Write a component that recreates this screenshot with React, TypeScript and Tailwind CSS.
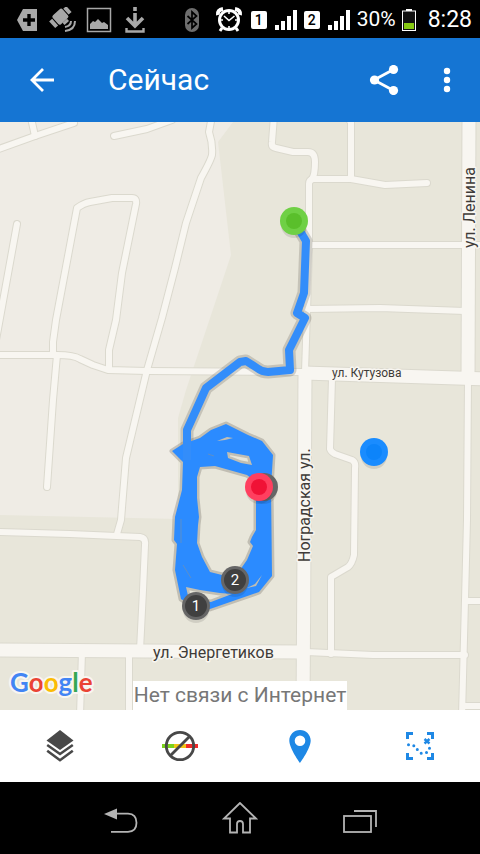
import type { ReactNode } from "react";

const SMALL_ROADS = [
  "M-4 150 35 136 74 123",
  "M31 118 35 136",
  "M114 136 147 129 172 120",
  "M212 116 209 132Q213 144 212 155Q211 160 201 178L186 223 175 268 162 318 147 370 126 458 121 520 117 534",
  "M17 224-4 340",
  "M53 355 53 342 56 320 77 208Q84 203 90 202L112 198H132Q137 198 136 204L122 273 116 320 109 350V369",
  "M-4 355H57Q74 355 80 359L93 365 108 370 147 371 304 372",
  "M57 355 53 400 47 487",
  "M274 116 272 142Q271 147 276 148L293 152H308Q315 152 315 162Q315 175 312 179",
  "M427 183 385 185 351 179H313Q309 180 309 184V250L305 372",
  "M346 116 351 122V179",
  "M308 245H484",
  "M306 309 380 308 465 311",
  "M332 378 330 449Q331 452 335 454L352 460Q356 462 355 468L354 555Q352 564 348 567L331 577V654",
  "M306 652 373 655H465",
  "M468 380 467 520 465 600 462 716",
  "M466 601H484",
  "M464 706H484",
  "M-4 532 70 534 140 537Q146 538 145 545L143 590 140 650",
  "M82 652 80 716",
  "M129 652V716",
];

const WIDE_ROADS = [
  "M469 116 468 380",
  "M304 373 484 379",
  "M305 373 303 716",
  "M-4 650 304 652",
];

const TRACK = "M294 221 306 241 304 293 297 313 305 318 289 350 290 370 268 372Q262 372 257 368L246 361 240 362 206 388 187 430V460";

const LAPS =
  "M172 451 183 444 200 438 211 430 226 424 248 435 262 441 273 455 271 487 272 576 259 592 210 609 196 608 181 599 175 570 177 544 174 540 175 517 182 490 183 462Z" +
  "M200 467 215 466 247 475 256 482 256 530 252 537 250 542 253 546 247 560 240 570 222 575 210 572 202 557 197 543 198 525 199 517 197 498 197 477Z" +
  "M227 452 249 456 252 465 241 463 228 458Z" +
  "M217 441 227 437 233 438 225 440Z" +
  "M186 587 200 590 220 593 232 594 211 602 189 600Z" +
  "M247 588 255 584 262 575 256 586Z";

function Roads() {
  return (
    <g fill="none" strokeLinejoin="round" strokeLinecap="round">
      <g stroke="#dbd9ce">
        {SMALL_ROADS.map((d) => (
          <path key={d} d={d} strokeWidth="8" />
        ))}
        {WIDE_ROADS.map((d) => (
          <path key={d} d={d} strokeWidth="15" strokeLinecap="butt" />
        ))}
      </g>
      <g stroke="#f8f6f1">
        {SMALL_ROADS.map((d) => (
          <path key={d} d={d} strokeWidth="6" />
        ))}
        {WIDE_ROADS.map((d) => (
          <path key={d} d={d} strokeWidth="13" strokeLinecap="butt" />
        ))}
      </g>
    </g>
  );
}

type MarkerProps = { x: number; y: number; ring: string; dot: string; label?: string };

function Marker({ x, y, ring, dot, label }: MarkerProps) {
  return (
    <g>
      <ellipse cx={x} cy={y + 4} rx="13" ry="13" fill="#000" opacity="0.1" />
      <circle cx={x} cy={y} r="14" fill={ring} />
      <circle cx={x} cy={y} r={label ? 11 : 8} fill={dot} />
      {label && (
        <text x={x} y={y + 5} textAnchor="middle" fontSize="15" fill="#fff">
          {label}
        </text>
      )}
    </g>
  );
}

function MapView() {
  return (
    <main className="relative min-h-100 flex-1 overflow-hidden bg-[#e8e6da]">
      <svg
        viewBox="0 122 480 588"
        preserveAspectRatio="xMidYMid slice"
        className="absolute inset-0 h-full w-full font-[Roboto,sans-serif]"
      >
        <path d="M0 122H233L218 142 231 255 186 390 178 418V519L0 515Z" fill="#efece5" />
        <Roads />

        <g fill="#3f3b38" stroke="#f8f6f1" strokeWidth="3" strokeLinejoin="round" paintOrder="stroke">
          <text x="332" y="377" fontSize="12">ул. Кутузова</text>
          <text x="153" y="658" fontSize="16">ул. Энергетиков</text>
          <text transform="translate(310 562) rotate(-90)" fontSize="16">Ноградская ул.</text>
          <text transform="translate(475 248) rotate(-90)" fontSize="16">ул. Ленина</text>
        </g>

        <path d={TRACK} fill="none" stroke="#77746a" strokeOpacity="0.3" strokeWidth="13" strokeLinejoin="round" />
        <path d={LAPS} fillRule="evenodd" fill="none" stroke="#77746a" strokeOpacity="0.35" strokeWidth="5" strokeLinejoin="round" />
        <path d={LAPS} fillRule="evenodd" fill="#2b8bff" />
        <path d={TRACK} fill="none" stroke="#338dfa" strokeWidth="8" strokeLinejoin="round" />
        <path d="M181 519V543M183 565 191 578M208 454 214 456" fill="none" stroke="#5c8fc9" strokeWidth="1" />

        <Marker x={294} y={221} ring="#6fd045" dot="#5abf2b" />
        <Marker x={374} y={452} ring="#1a8cff" dot="#0d84fa" />
        <Marker x={264} y={487} ring="#666" dot="#444" />
        <Marker x={259} y={487} ring="#ff3f5f" dot="#f01236" />
        <Marker x={235} y={580} ring="#666" dot="#404040" label="2" />
        <Marker x={196} y={606} ring="#666" dot="#404040" label="1" />

        <text
          x="10"
          y="692"
          fontSize="26"
          fontWeight="700"
          stroke="#f8f6f1"
          strokeWidth="4"
          strokeLinejoin="round"
          paintOrder="stroke"
          className="font-[Lato,sans-serif]"
        >
          <tspan fill="#4285f4">G</tspan>
          <tspan fill="#ea4335">o</tspan>
          <tspan fill="#fbbc05">o</tspan>
          <tspan fill="#4285f4">g</tspan>
          <tspan fill="#34a853">l</tspan>
          <tspan fill="#ea4335">e</tspan>
        </text>
      </svg>

      <div className="absolute inset-x-0 bottom-0 flex justify-center">
        <p role="status" className="bg-white px-px text-[21px] leading-[29px] text-[#777]">
          Нет связи с Интернет
        </p>
      </div>
    </main>
  );
}

function SimSignal({ sim }: { sim: string }) {
  return (
    <div className="flex items-center gap-2">
      <span className="flex h-[18px] w-4 items-center justify-center rounded-xs bg-white text-sm font-medium text-black">
        {sim}
      </span>
      <svg width="23" height="20" viewBox="0 0 23 20" fill="#fff">
        <path d="M0 15h4v5H0zM6 11h4v9H6zM12 6h4v14h-4zM18 0h4v20h-4z" />
      </svg>
    </div>
  );
}

function StatusBar() {
  return (
    <div className="flex h-[38px] shrink-0 items-center justify-between bg-black pt-0.5 pr-2 pl-[9px] text-white">
      <div className="flex text-[#a8a8a8] *:w-9">
        <svg height="26" viewBox="0 0 36 26" fill="currentColor">
          <path d="M14 2H28V24H14L8 13Z" />
          <path d="M20 7v12M14 13h12" stroke="#000" strokeWidth="3.4" />
        </svg>
        <svg height="26" viewBox="0 0 36 26" fill="currentColor">
          <g transform="rotate(-42 15 10)">
            <rect x="9" y="4" width="13" height="12" rx="2" />
            <rect x="4" y="6" width="4" height="9" />
            <rect x="23" y="6" width="4" height="8" />
            <path d="M13 16h6v3h-6z" />
          </g>
          <path d="M26 14Q26 19 20 20M30 14Q30 23 20 24" fill="none" stroke="currentColor" strokeWidth="2" />
        </svg>
        <svg height="26" viewBox="0 0 36 26" fill="currentColor">
          <rect x="6.5" y="1.5" width="23" height="23" fill="none" stroke="currentColor" strokeWidth="1.5" />
          <path d="M9 22v-5l3-3 2 1 3-3 4 4 2-1 4 3v4z" />
        </svg>
        <svg height="26" viewBox="0 0 36 26" fill="none" stroke="currentColor" strokeWidth="3.6">
          <path d="M18 0v4M18 6v13M10 11l8 8 8-8" />
          <path d="M9.500 21v3.500h17V21" strokeWidth="2.400" />
        </svg>
      </div>

      <div className="flex items-center gap-[6px]">
        <svg width="30" height="24" viewBox="0 0 30 24">
          <rect x="8" y="0" width="14" height="24" rx="7" fill="#6e6e6e" />
          <path d="m10.500 8 9 8-4.500 4V4l4.500 4-9 8" fill="none" stroke="#000" strokeWidth="1.700" />
        </svg>
        <svg width="32" height="26" viewBox="0 0 32 26" fill="none" stroke="#fff">
          <circle cx="16" cy="13" r="9.500" strokeWidth="3" />
          <path d="m11 9 5 4.500L21.500 9M16 5v2M16 19v2M8 13h2M22 13h2" strokeWidth="1.600" />
          <path d="M5 8Q4 3 10 2M27 8Q28 3 22 2" strokeWidth="4" />
          <path d="m9 21-2 3M23 21l2 3" strokeWidth="3" />
        </svg>
        <SimSignal sim="1" />
        <SimSignal sim="2" />
        <span className="text-[21px]">30%</span>
        <svg width="14" height="22" viewBox="0 0 14 22" className="mr-0.5">
          <path d="M4 0h6v2H4z" fill="#fff" />
          <rect x="0.500" y="2" width="13" height="19.500" fill="#111" stroke="#fff" />
          <path d="M2 14h10v6H2z" fill="#86c912" />
        </svg>
        <span className="pl-1 text-[23px]">8:28</span>
      </div>
    </div>
  );
}

function AppBar() {
  return (
    <header className="flex h-21 shrink-0 items-center bg-[#1575d3] px-4 text-white">
      <button type="button" aria-label="Назад" className="flex w-13 justify-center">
        <svg width="26" height="26" viewBox="0 0 26 26" fill="none" stroke="currentColor" strokeWidth="2.800">
          <path d="M25 13H3M14 2 3 13l11 11" />
        </svg>
      </button>
      <h1 className="flex-1 pl-10 text-[30px] leading-9">Сейчас</h1>
      <button type="button" aria-label="Поделиться" className="flex w-23 justify-center">
        <svg width="30" height="30" viewBox="0 0 30 30" fill="currentColor">
          <path d="M24.500 4.500 5 15l19.500 10.500" fill="none" stroke="currentColor" strokeWidth="2.800" />
          <circle cx="24.500" cy="4.500" r="4.600" />
          <circle cx="5.500" cy="15" r="4.600" />
          <circle cx="24.500" cy="25.500" r="4.600" />
        </svg>
      </button>
      <button type="button" aria-label="Ещё" className="flex w-[34px] justify-center">
        <svg width="8" height="26" viewBox="0 0 8 26" fill="currentColor">
          <circle cx="4" cy="4" r="3.200" />
          <circle cx="4" cy="13" r="3.200" />
          <circle cx="4" cy="22" r="3.200" />
        </svg>
      </button>
    </header>
  );
}

function ToolButton({ label, children }: { label: string; children: ReactNode }) {
  return (
    <button type="button" aria-label={label} className="flex items-center justify-center">
      <svg width="36" height="36" viewBox="0 0 36 36">
        {children}
      </svg>
    </button>
  );
}

function Toolbar() {
  return (
    <nav className="grid h-18 shrink-0 grid-cols-4 bg-white">
      <ToolButton label="Слои">
        <path d="M18 2 31.500 12.500 18 22 4.500 12.500Z" fill="#484848" />
        <path d="M5.200 17 18 26 30.800 17M5.200 22.800 18 32.200 30.800 22.800" fill="none" stroke="#484848" strokeWidth="2.600" />
      </ToolButton>
      <ToolButton label="Без раскраски по скорости">
        <path d="M0 16h12v4H0z" fill="#7bd21c" />
        <path d="M12 16h12v4H12z" fill="#f2c516" />
        <path d="M24 16h12v4H24z" fill="#ef2b2b" />
        <circle cx="18" cy="18" r="13.700" fill="none" stroke="#484848" strokeWidth="2.800" />
        <path d="m8.500 27.500 19-19" stroke="#484848" strokeWidth="2.800" />
      </ToolButton>
      <ToolButton label="Моё местоположение">
        <path
          d="M18 2C12 2 7.300 6.700 7.300 12.600 7.300 20.500 18 35 18 35S28.700 20.500 28.700 12.600C28.700 6.700 24 2 18 2Zm0 5.400a5.300 5.300 0 1 1 0 10.600 5.300 5.300 0 0 1 0-10.600Z"
          fill="#1e88e5"
          fillRule="evenodd"
        />
      </ToolButton>
      <ToolButton label="Показать весь трек">
        <g fill="none" stroke="#1e88e5">
          <path d="M11 5.500H5.500V11M25 5.500h5.500V11M11 30.500H5.500V25M25 30.500h5.500V25" strokeWidth="3" />
          <path d="m22.500 11 5 4.500M27.500 11l-5 4.500" strokeWidth="2.400" />
          <path
            d="M6.500 16.800h.01M11.800 17.800h.01M15.300 21.500h.01M19.200 25.200h.01M24.500 24.500h.01M27.500 20.300h.01"
            strokeWidth="3"
            strokeLinecap="round"
          />
        </g>
      </ToolButton>
    </nav>
  );
}

function NavBar() {
  return (
    <nav className="grid h-18 shrink-0 grid-cols-3 bg-black px-[12.5%] pt-1 *:flex *:items-center *:justify-center">
      <button type="button" aria-label="Назад">
        <svg width="36" height="36" viewBox="0 0 36 36" fill="none" stroke="#b4b4b4" strokeWidth="1.800">
          <path d="M13 11.700H26Q34.500 12 34.500 20.800T26 29.800H9" />
          <path d="M2 12 15 6.500v11Z" fill="#b4b4b4" stroke="none" />
        </svg>
      </button>
      <button type="button" aria-label="Домой">
        <svg width="36" height="36" viewBox="0 0 36 36" fill="none" stroke="#b4b4b4" strokeWidth="1.800">
          <path d="M18 1 2 16.500h6V30.500h7V22q0-3 3-3t3 3v8.500h7V16.500h6Z" />
        </svg>
      </button>
      <button type="button" aria-label="Недавние">
        <svg width="36" height="36" viewBox="0 0 36 36" fill="none" stroke="#b4b4b4" strokeWidth="1.800">
          <rect x="2" y="14" width="27" height="16" />
          <path d="M12 9h22v16" />
        </svg>
      </button>
    </nav>
  );
}

export default function App() {
  return (
    <div className="flex min-h-screen flex-col font-[Roboto,sans-serif]">
      <StatusBar />
      <AppBar />
      <MapView />
      <Toolbar />
      <NavBar />
    </div>
  );
}
